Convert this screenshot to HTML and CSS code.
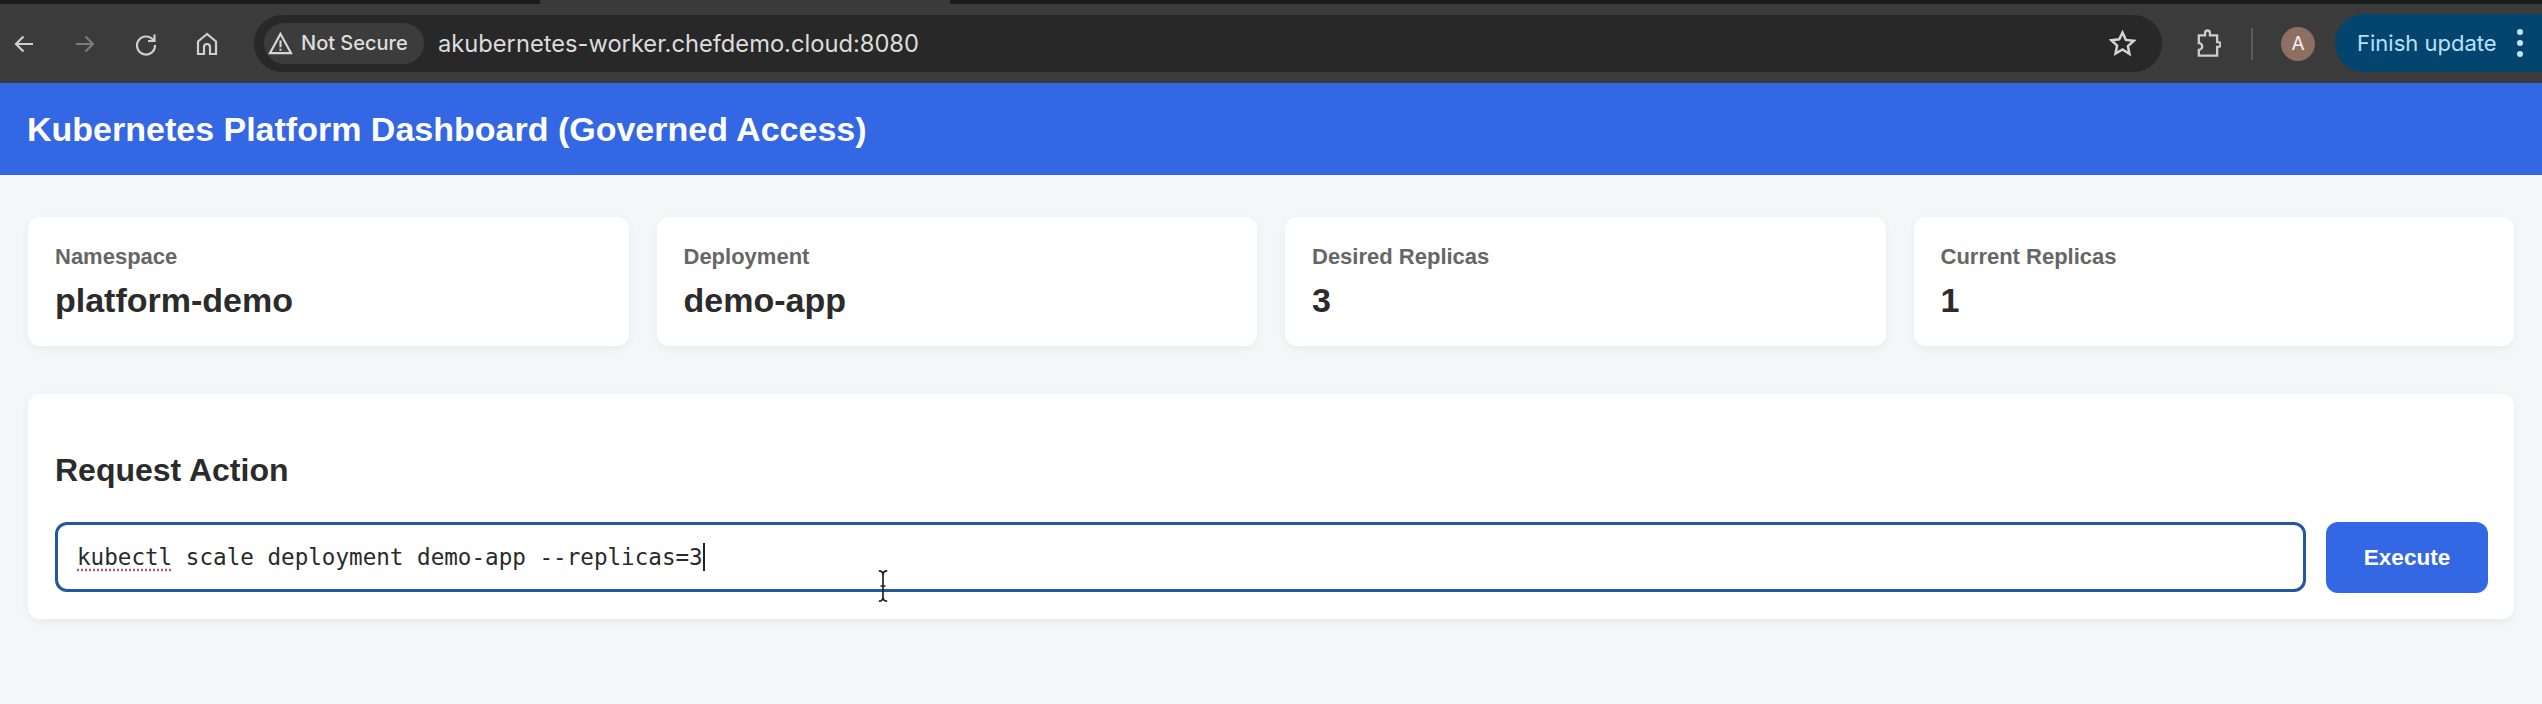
FILE: index.html
```html
<!DOCTYPE html>
<html lang="en">
<head>
  <meta charset="UTF-8" />
  <title>Kubernetes Platform Dashboard</title>
  <link rel="stylesheet" href="styles.css">
</head>
<body>
  <div class="tabstrip">
    <div class="tabstrip-dark tabstrip-left"></div>
    <div class="tabstrip-tab"></div>
    <div class="tabstrip-dark tabstrip-right"></div>
  </div>

  <div class="toolbar">
    <div class="nav-icons">
      <svg class="icon" viewBox="0 0 26 26"><path d="M22 13H5M12.500 5.500 5 13l7.500 7.500"/></svg>
      <svg class="icon icon-off" viewBox="0 0 26 26"><path d="M4 13h17M13.500 5.500 21 13l-7.500 7.500"/></svg>
      <svg class="icon" viewBox="0 0 26 26"><path d="M20.500 9.500A9 9 0 1 0 22 14M21.500 3.500v6.500H15"/></svg>
      <svg class="icon" viewBox="0 0 26 26"><path d="M13 3 4 10.500V23h6v-7a3 3 0 0 1 6 0v7h6V10.500Z"/></svg>
    </div>
    <div class="omnibox">
      <div class="security-chip">
        <svg class="icon-warn" viewBox="0 0 26 26"><path d="M13 3 2 23h22Z"/><path d="M13 10v7M13 18.500v2"/></svg>
        <span>Not Secure</span>
      </div>
      <span class="url">akubernetes-worker.chefdemo.cloud:8080</span>
      <svg class="icon-star" viewBox="0 0 26 26"><path d="m13 2.500 3.200 7 7.600.9-5.600 5.200 1.500 7.500L13 18.800l-6.700 3.800 1.500-7.500-5.600-5.200 7.600-.9Z"/></svg>
    </div>
    <svg class="icon-ext" viewBox="0 0 28 30"><path d="M5 6h6.500V3.500a2.500 2.500 0 0 1 5 0V6H24v7h1a2.500 2.500 0 0 1 0 5h-1v9H5v-6a3.500 3.500 0 0 0 0-7V6Z"/></svg>
    <div class="toolbar-sep"></div>
    <div class="avatar">A</div>
    <div class="update-pill">
      <span>Finish update</span>
      <div class="update-dots"><i></i><i></i><i></i></div>
    </div>
  </div>

  <header class="app-header">
    <h1>Kubernetes Platform Dashboard (Governed Access)</h1>
  </header>

  <main class="content">
    <section class="stats">
      <div class="card">
        <div class="card-label">Namespace</div>
        <div class="card-value">platform-demo</div>
      </div>
      <div class="card">
        <div class="card-label">Deployment</div>
        <div class="card-value">demo-app</div>
      </div>
      <div class="card">
        <div class="card-label">Desired Replicas</div>
        <div class="card-value">3</div>
      </div>
      <div class="card">
        <div class="card-label">Current Replicas</div>
        <div class="card-value">1</div>
      </div>
    </section>

    <section class="panel">
      <h2>Request Action</h2>
      <div class="action-row">
        <div class="command-input">
          <span class="misspelled">kubectl</span> scale deployment demo-app --replicas=3<span class="caret"></span>
          <svg class="ibeam" viewBox="0 0 14 38"><path d="M2 1c3 0 5 2 5 5v26c0 3-2 5-5 5M12 1C9 1 7 3 7 6v26c0 3 2 5 5 5M4 19h6"/></svg>
        </div>
        <button class="execute">Execute</button>
      </div>
    </section>
  </main>
</body>
</html>
```

FILE: styles.css
```css
body {
  margin: 0;
  height: 704px;
  overflow: hidden;
  font-family: 'Liberation Sans', Arial, sans-serif;
  background: #f4f6f8;
  color: #2b2b2b;
}

/* Browser chrome */
.tabstrip {
  display: flex;
  height: 4px;
}
.tabstrip-dark {
  background: #1b1b1b;
}
.tabstrip-left {
  width: 540px;
}
.tabstrip-tab {
  width: 410px;
  background: #3a3a3a;
}
.tabstrip-right {
  flex: 1;
}

.toolbar {
  display: flex;
  align-items: center;
  height: 79px;
  background: #3b3b3b;
  font-family: Inter, 'Noto Sans', sans-serif;
}

.nav-icons {
  display: flex;
  align-items: center;
  gap: 35px;
  margin-left: 11px;
  margin-right: 34px;
}

.icon {
  width: 26px;
  height: 26px;
  fill: none;
  stroke: #cfcfcf;
  stroke-width: 2.2;
}
.icon-off {
  stroke: #7c7c7c;
}

.omnibox {
  width: 1908px;
  height: 57px;
  display: flex;
  align-items: center;
  box-sizing: border-box;
  padding-left: 10px;
  padding-right: 26px;
  margin-top: -1px;
  border-radius: 29px;
  background: #282828;
}

.security-chip {
  display: flex;
  align-items: center;
  gap: 8px;
  width: 160px;
  height: 41px;
  box-sizing: border-box;
  padding-left: 4px;
  border-radius: 21px;
  background: #3c3c3c;
  color: #dedede;
  font-size: 20px;
  font-weight: 500;
}

.icon-warn {
  width: 25px;
  height: 25px;
  flex-shrink: 0;
  fill: none;
  stroke: #d6d6d6;
  stroke-width: 2.2;
}

.url {
  margin-left: 14px;
  flex: 1;
  color: #dcdcdc;
  font-size: 23.700px;
}

.icon-star {
  width: 27px;
  height: 27px;
  fill: none;
  stroke: #d4d4d4;
  stroke-width: 2.4;
}

.icon-ext {
  width: 27px;
  height: 30px;
  margin-left: 32px;
  fill: none;
  stroke: #cdcdcd;
  stroke-width: 2.4;
}

.toolbar-sep {
  width: 2px;
  height: 32px;
  margin-left: 30px;
  background: #5c5c5c;
}

.avatar {
  width: 34px;
  height: 34px;
  margin-left: 28px;
  border-radius: 50%;
  background: #8f6f64;
  color: #f4eeee;
  font-size: 19px;
  line-height: 34px;
  text-align: center;
}

.update-pill {
  display: flex;
  align-items: center;
  flex: 1;
  height: 58px;
  margin-left: 20px;
  margin-top: -1px;
  padding-left: 22px;
  border-radius: 29px 0 0 29px;
  background: #03456f;
  color: #b9e0fb;
  font-size: 22px;
}

.update-dots {
  display: flex;
  flex-direction: column;
  gap: 5px;
  margin-left: 20px;
}
.update-dots i {
  display: block;
  width: 6px;
  height: 6px;
  border-radius: 50%;
  background: #c3e4fb;
}

/* Page header */
.app-header {
  height: 92px;
  display: flex;
  align-items: center;
  padding-left: 27px;
  background: #3367e4;
  color: #fff;
}
.app-header h1 {
  margin: 0;
  font-size: 34px;
}

.content {
  padding: 42px 28px;
}

.stats {
  display: grid;
  grid-template-columns: repeat(4, 1fr);
  gap: 28px;
}

.card {
  height: 129px;
  box-sizing: border-box;
  padding: 27px 27px;
  border-radius: 12px;
  background: #fff;
  box-shadow: 0 3px 10px rgba(0, 0, 0, 0.05);
}

.card-label {
  color: #666;
  font-size: 22px;
  font-weight: bold;
}

.card-value {
  margin-top: 11px;
  font-size: 34px;
  font-weight: bold;
}

.panel {
  height: 225px;
  box-sizing: border-box;
  margin-top: 48px;
  padding: 58px 26px 0 27px;
  border-radius: 12px;
  background: #fff;
  box-shadow: 0 3px 10px rgba(0, 0, 0, 0.05);
}

.panel h2 {
  margin: 0;
  font-size: 32px;
  line-height: 37px;
}

.action-row {
  display: flex;
  gap: 20px;
  margin-top: 33px;
}

.command-input {
  flex: 1;
  height: 70px;
  box-sizing: border-box;
  display: flex;
  align-items: center;
  white-space: pre;
  position: relative;
  padding-left: 19px;
  border: 3px solid #22589f;
  border-radius: 12px;
  font-family: 'DejaVu Sans Mono', monospace;
  font-size: 22.600px;
  color: #2a2a2a;
}

.misspelled {
  text-decoration: underline dotted #c0527a;
  text-underline-offset: 4px;
}

.caret {
  display: inline-block;
  width: 2px;
  height: 28px;
  background: #222;
}

/* mouse pointer sits over the input border */
.ibeam {
  position: absolute;
  left: 819px;
  top: 45px;
  width: 12px;
  height: 32px;
  fill: none;
  stroke: #222;
  stroke-width: 2;
}

.execute {
  width: 162px;
  height: 71px;
  border: none;
  border-radius: 12px;
  background: #3367e4;
  color: #fff;
  font-family: inherit;
  font-size: 22.500px;
  font-weight: bold;
}
```
